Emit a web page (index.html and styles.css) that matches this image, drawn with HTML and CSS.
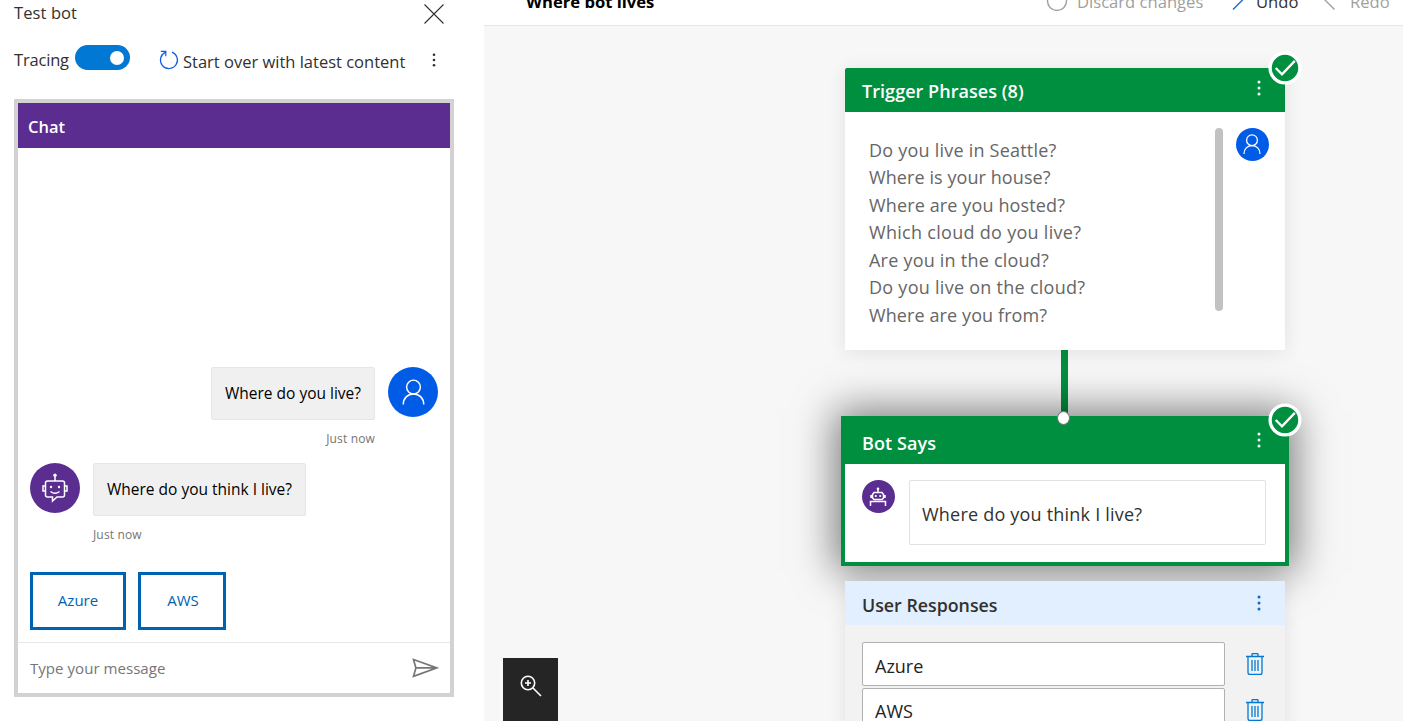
FILE: index.html
```html
<!DOCTYPE html>
<html lang="en">
<head>
<meta charset="utf-8">
<title>Test bot</title>
<link rel="stylesheet" href="styles.css">
</head>
<body>
<svg class="defs" width="0" height="0">
  <symbol id="person" viewBox="0 0 24 28"><circle cx="12" cy="8.3" r="7.2"/><path d="M1.3 26.5c0-6.500 4.600-11 10.700-11s10.700 4.500 10.700 11"/></symbol>
  <symbol id="trash" viewBox="0 0 18 22"><path d="M0 3.500h18M6 3.500v-2q0-1 1-1h4q1 0 1 1v2M2 3.500v16q0 2 2 2h10q2 0 2-2v-16M6 7v11M9 7v11M12 7v11"/></symbol>
  <symbol id="check" viewBox="0 0 34 34"><circle cx="17" cy="17" r="14.900" class="check-disc"/><path d="M7.700 17l6.300 6.300 12.800-13.400" class="check-mark"/></symbol>
  <symbol id="dots" viewBox="0 0 4 16"><circle cx="2" cy="2" r="1.500"/><circle cx="2" cy="8" r="1.500"/><circle cx="2" cy="14" r="1.500"/></symbol>
</svg>
<div class="app">
  <aside class="panel">
    <div class="panel-title"><span class="t-test">Test bot</span>
      <svg class="close" width="20" height="20" viewBox="0 0 20 20"><path d="M.5.5l19 19M19.500.5l-19 19"/></svg>
    </div>
    <div class="tools">
      <span class="t-tracing">Tracing</span>
      <span class="toggle"><i></i></span>
      <svg class="restart" width="20" height="20" viewBox="0 0 20 20"><path d="M13 2.100a8.500 8.500 0 1 1-6.800.3M1.800 1.300h5v5"/></svg>
      <span class="t-start">Start over with latest content</span>
      <svg class="dots tools-dots" width="4" height="14"><use href="#dots"/></svg>
    </div>
    <section class="chat">
      <header class="chat-head"><span class="t-chat">Chat</span></header>
      <div class="messages">
        <div class="msg mine">
          <div class="msg-body"><div class="bubble"><span class="t-q1">Where do you live?</span></div><small><span class="t-now">Just now</span></small></div>
          <div class="avatar blue"><svg width="23" height="27"><use href="#person"/></svg></div>
        </div>
        <div class="msg">
          <div class="avatar purple">
            <svg width="26" height="30" viewBox="0 0 26 30"><path d="M13 3v5M3.500 10q0-2 2-2h15q2 0 2 2v12q0 2-2 2H15l-4.500 4v-4h-5q-2 0-2-2zM3 13H1v5h2M23 13h2v5h-2M8.500 18.500q4.500 3.500 9 0"/><circle cx="13" cy="2.300" r="1.700" class="fill"/><circle cx="9" cy="14" r="1.200" class="fill"/><circle cx="17" cy="14" r="1.200" class="fill"/></svg>
          </div>
          <div class="msg-body"><div class="bubble"><span class="t-q2">Where do you think I live?</span></div><small><span class="t-now">Just now</span></small></div>
        </div>
        <div class="choices"><button class="c-azure"><span class="t-azure">Azure</span></button><button class="c-aws"><span class="t-aws">AWS</span></button></div>
      </div>
      <footer class="composer"><span class="t-type">Type your message</span>
        <svg width="27" height="20" viewBox="0 0 27 20"><path d="M1.500 1.500L25 9.900 1.500 18.300l2.400-8.400zM3.900 9.900H25"/></svg>
      </footer>
    </section>
  </aside>
  <main class="main">
    <header class="topbar">
      <span class="t-title">Where bot lives</span>
      <span class="action discard"><svg width="22" height="22" viewBox="0 0 22 22"><circle cx="11" cy="11" r="9.500"/></svg><span class="t-discard">Discard changes</span></span>
      <span class="action undo"><svg width="22" height="22" viewBox="0 0 22 22"><path d="M12.500-1L22.500 9l-10.500 10.500"/></svg><span class="t-undo">Undo</span></span>
      <span class="action redo"><svg width="22" height="22" viewBox="0 0 22 22"><path d="M11-1L1 9l10.500 10.500"/></svg><span class="t-redo">Redo</span></span>
    </header>
    <div class="canvas">
      <div class="flow">
        <article class="node trigger">
          <header class="node-head"><span class="t-trigger">Trigger Phrases (8)</span><svg class="dots" width="4" height="16"><use href="#dots"/></svg></header>
          <div class="trigger-body">
            <ul class="phrases">
              <li><span class="p1">Do you live in Seattle?</span></li><li><span class="p2">Where is your house?</span></li><li><span class="p3">Where are you hosted?</span></li><li><span class="p4">Which cloud do you live?</span></li><li><span class="p5">Are you in the cloud?</span></li><li><span class="p6">Do you live on the cloud?</span></li><li><span class="p7">Where are you from?</span></li>
            </ul>
            <div class="scrollbar"></div>
            <div class="avatar small blue"><svg width="18" height="21"><use href="#person"/></svg></div>
          </div>
          <svg class="badge" width="34" height="34"><use href="#check"/></svg>
        </article>
        <div class="connector"></div>
        <article class="node says">
          <header class="node-head"><span class="t-says">Bot Says</span><svg class="dots" width="4" height="16"><use href="#dots"/></svg></header>
          <div class="says-body">
            <div class="avatar small purple">
              <svg width="18" height="20" viewBox="0 0 18 20"><path d="M9 2v3.500M5 5.500h8l1.500 2v3.500l-1.500 1.500H5L3.500 11V7.500zM1.500 19v-4.500h15V19M2 8v3M16 8v3"/><circle cx="9" cy="1.800" r="1.300" class="fill"/><circle cx="6.800" cy="9" r="1.100" class="fill"/><circle cx="11.200" cy="9" r="1.100" class="fill"/></svg>
            </div>
            <div class="prompt"><span class="t-prompt">Where do you think I live?</span></div>
          </div>
          <i class="port"></i>
          <svg class="badge" width="34" height="34"><use href="#check"/></svg>
        </article>
        <article class="node responses">
          <header class="node-head"><span class="t-responses">User Responses</span><svg class="dots" width="4" height="16"><use href="#dots"/></svg></header>
          <div class="rows">
            <div class="row"><div class="field"><span class="t-f1">Azure</span></div><svg class="trash" width="18" height="22"><use href="#trash"/></svg></div>
            <div class="row"><div class="field"><span class="t-f2">AWS</span></div><svg class="trash" width="18" height="22"><use href="#trash"/></svg></div>
          </div>
        </article>
      </div>
      <div class="zoom"><svg width="22" height="22" viewBox="0 0 22 22"><circle cx="8" cy="8" r="6.700"/><path d="M8 5v6M5 8h6M13 13l8 8"/></svg></div>
    </div>
  </main>
</div>
</body>
</html>
```
FILE: styles.css
```css
* { box-sizing: border-box; }
body { margin: 0; overflow: hidden; background: #fff; color: #323130; font-family: "Open Sans", "Noto Sans", sans-serif; }
span { white-space: nowrap; }
svg { flex: none; fill: none; stroke: currentColor; }
.defs { position: absolute; }
.fill { fill: currentColor; stroke: none; }
.dots { fill: currentColor; stroke: none; }
.app { display: flex; height: 721px; overflow: hidden; }

.panel { width: 484px; flex: none; padding-left: 14px; }
.panel-title { display: flex; justify-content: space-between; align-items: center; height: 27px; padding-right: 40px; font-size: 16.500px; }
.t-test { padding-bottom: 2px; font-weight: 500; letter-spacing: .1px; }
.close { stroke-width: 1.100; }
.tools { display: flex; align-items: center; height: 72px; padding-bottom: 6px; font-size: 16.500px; }
.t-tracing { width: 61px; padding-bottom: 2px; letter-spacing: -.18px; }
.toggle { display: flex; justify-content: flex-end; align-items: center; width: 55px; height: 25px; margin-top: -5px; padding-right: 6px; border-radius: 13px; background: #0078d4; }
.toggle i { width: 14px; height: 14px; border-radius: 50%; background: #fff; }
.restart { margin-left: 29px; color: #0f5be8; stroke-width: 1.200; }
.t-start { width: 222px; margin-left: 4px; padding-top: 2px; }
.tools-dots { margin-left: 27px; }
.chat { display: flex; flex-direction: column; width: 440px; height: 598px; border: 4px solid #d2d2d2; font-size: 15.500px; }
.chat-head { display: flex; align-items: center; height: 45px; padding: 2px 0 0 10px; background: #5c2d91; color: #fff; font-size: 16.500px; font-weight: 600; }
.messages { display: flex; flex: 1; flex-direction: column; justify-content: flex-end; padding: 0 12px 12px; }
.msg { display: flex; gap: 13px; height: 96px; }
.mine { justify-content: flex-end; }
.avatar { display: flex; flex: none; align-items: center; justify-content: center; width: 50px; height: 50px; border-radius: 50%; color: #fff; stroke-width: 1.500; }
.blue { background: #005ce6; }
.purple { background: #5c2d91; }
.bubble { display: flex; align-items: center; height: 53px; padding: 0 13px 2px; border: 1px solid #e6e6e6; border-radius: 2px; background: #f0f0f0; color: #000; }
.msg-body small { display: block; margin-top: 10px; color: #767676; font-size: 12px; line-height: 17px; letter-spacing: .15px; }
.mine small { text-align: right; }
.choices { display: flex; gap: 12px; margin-top: 13px; }
.choices button { height: 58px; padding: 0 0 2px; border: 3px solid #0063b1; background: #fff; color: #0063b1; font: inherit; font-size: 15px; }
.choices .c-azure { width: 96px; }
.choices .c-aws { width: 88px; padding-left: 2px; }
.composer { display: flex; align-items: center; justify-content: space-between; height: 51px; padding: 0 11px 0 12px; border-top: 1px solid #e6e6e6; color: #767676; font-size: 15.100px; stroke-width: 1.700; }

.main { display: flex; flex: 1; flex-direction: column; min-width: 0; }
.topbar { display: flex; height: 26px; padding-left: 42px; border-bottom: 1px solid #e6e6e6; font-size: 16.600px; line-height: 24px; }
.topbar > span { margin-top: -10px; }
.t-title { width: 520px; color: #000; font-weight: 700; }
.action { display: flex; gap: 9px; color: #a19f9d; }
.action svg { overflow: visible; stroke-width: 1.400; }
.discard { width: 175px; }
.undo { width: 102px; gap: 13px; color: #323130; }
.undo svg { color: #2266d3; }
.redo { gap: 5px; }
.canvas { display: flex; flex: 1; align-items: flex-end; min-height: 0; padding-left: 19px; background: #f7f7f7; }
.flow { order: 2; align-self: flex-start; width: 440px; margin: 42px 0 0 287px; }
.node { position: relative; width: 440px; background: #fff; box-shadow: 0 2px 18px rgba(0,0,0,.09); }
.node-head { display: flex; align-items: center; justify-content: space-between; height: 44px; padding: 2px 24px 0 17px; border-radius: 2px 2px 0 0; background: #008f3f; color: #fff; font-size: 18px; font-weight: 600; }
.node-head .dots { margin-top: -6px; }
.badge { position: absolute; top: -17px; right: -17px; }
.check-disc { fill: #008f3f; stroke: #fff; stroke-width: 3.300; }
.check-mark { stroke: #fff; stroke-width: 2.300; }
.trigger { height: 282px; }
.trigger-body { display: flex; padding: 16px 16px 0 24px; }
.phrases { width: 345.500px; margin: 8.500px 0 0; padding: 0; color: #666; font-size: 18px; line-height: 27.500px; list-style: none; }
.p1 { letter-spacing: .22px; }
.p2 { letter-spacing: .08px; }
.p3 { letter-spacing: .13px; }
.p4 { letter-spacing: .29px; }
.p5 { letter-spacing: .22px; }
.p6 { letter-spacing: .27px; }
.p7 { letter-spacing: .1px; }
.t-prompt { letter-spacing: .21px; }
.t-says { letter-spacing: .1px; }
.t-trigger { letter-spacing: .05px; }
.scrollbar { width: 8px; height: 183px; margin-right: 13px; border-radius: 4px; background: #c2c2c2; }
.small { width: 33px; height: 33px; stroke-width: 1.700; }
.connector { width: 7px; height: 66px; margin-left: 216px; background: #008f3f; }
.says { width: 448px; height: 150px; margin-left: -4px; border: 4px solid #008f3f; box-shadow: 0 0 38px 6px rgba(0,0,0,.5); }
.port { position: absolute; top: -9px; left: 212px; width: 13px; height: 14px; border: 1px solid #777; border-radius: 50%; background: #fff; }
.says .node-head { border-radius: 0; }
.says-body { display: flex; gap: 14px; padding: 16px 19px 0 17px; }
.prompt { display: flex; align-items: center; flex: 1; height: 65px; padding: 2px 0 0 12px; border: 1px solid #e1e1e1; border-radius: 2px; color: #323130; font-size: 18px; }
.says .small { margin-left: -.5px; margin-right: .5px; stroke-width: 1.500; }
.responses { height: 160px; margin-top: 15px; background: #f2f2f2; }
.responses .node-head { padding-top: 4px; background: #e2effe; color: #323130; font-size: 17.800px; }
.responses .dots { margin-top: -5px; color: #0b6cd4; }
.rows { display: flex; flex-direction: column; gap: 2px; padding: 17px 21px 0 17px; }
.row { display: flex; align-items: center; justify-content: space-between; height: 44px; }
.field { display: flex; align-items: center; width: 363px; height: 44px; padding: 3px 0 0 12px; border: 1px solid #b3b0ad; border-radius: 2px; background: #fff; color: #222; font-size: 18px; }
.row:nth-child(2) .field { padding-top: 1px; }
.trash { color: #0078d4; stroke-width: 1.300; }
.zoom { order: 1; display: flex; justify-content: center; width: 55px; height: 63px; padding-top: 17px; background: #252525; color: #fff; stroke-width: 1.600; }
```
